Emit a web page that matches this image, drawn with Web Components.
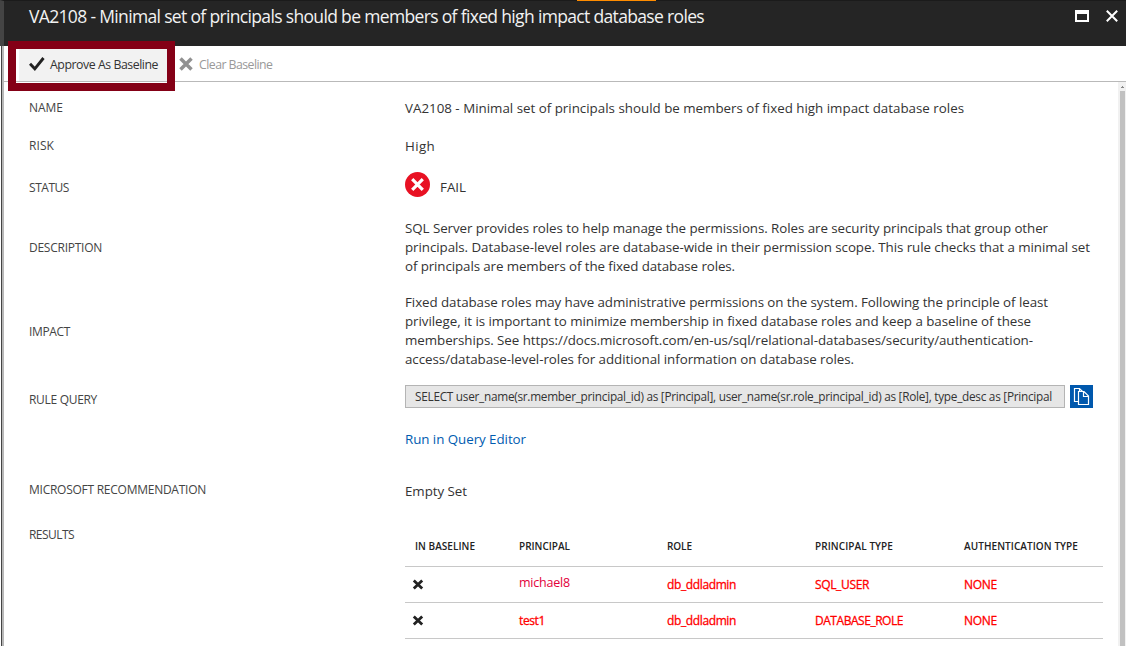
<!DOCTYPE html>
<html lang="en">
<head>
<meta charset="utf-8">
<title>VA2108</title>
<style>
html,body{margin:0;height:650px;overflow:hidden;background:#fff;font-family:"Open Sans","Noto Sans",sans-serif}
</style>
</head>
<body>
<rule-blade></rule-blade>
<script>
/* One line of text, letter-spaced to occupy the width given by "w". */
class FitText extends HTMLElement{
  constructor(){super();this.attachShadow({mode:'open'}).innerHTML='<style>:host{display:block;white-space:nowrap}span{display:inline-block}</style><span><slot></slot></span>';}
  connectedCallback(){
    const w=+this.getAttribute('w'),s=this.shadowRoot.querySelector('span'),n=this.textContent.length;
    if(w)this.style.letterSpacing=((w-s.getBoundingClientRect().width)/n).toFixed(4)+'px';
  }
}

class BladeHeader extends HTMLElement{
  constructor(){super();this.attachShadow({mode:'open'}).innerHTML=`<style>
  :host{display:flex;height:46px;box-sizing:border-box;background:#252525;border-top:1px solid #1b1b1b;border-left:4px solid #444;color:#f2f2f2;position:relative}
  i{position:absolute;left:573px;top:-1px;width:79px;height:1px;background:#ff8c00}
  .t{flex:1;padding:1px 0 0 25px;font-size:17.5px;line-height:28px}
  svg{display:block;margin-top:9px}
  .m{margin-right:17px}.c{margin-right:8px}
  </style><i></i><div class="t"><slot></slot></div>
  <svg class="m" width="14" height="12"><path d="M0 0h14v12H0zM2 4v6h10V4z" fill="#fff" fill-rule="evenodd"/></svg>
  <svg class="c" width="12" height="12"><path d="M.8.8l10.4 10.4M11.2.8L.8 11.2" stroke="#fff" stroke-width="2"/></svg>`;}
}

class CommandBar extends HTMLElement{
  constructor(){super();this.attachShadow({mode:'open'}).innerHTML=`<style>
  :host{display:flex;height:36px;box-sizing:border-box;border-bottom:1px solid #b9b9b9;margin-left:4px;padding-left:4px;font-size:12.3px;line-height:20px;color:#333}
  .on{box-sizing:border-box;width:167px;height:50px;margin-top:-5px;border:8px solid #840016;background:linear-gradient(90deg,#fff 3px,#f2f2f2 3px);position:relative;z-index:1;display:flex;padding:6px 0 0 13px;gap:5px}
  .on::after{content:"";position:absolute;left:0;right:0;bottom:0;height:1px;background:#fff;border-top:1px solid #b9b9b9}
  .off{display:flex;gap:6px;padding:9px 0 0 4px;color:#999}
  svg{display:block}
  </style><div class="on"><svg width="16" height="16" style="margin-top:1px"><path d="M1 7.8l4.8 5L14.5 2" fill="none" stroke="#222" stroke-width="2.9"/></svg><fit-text w="108">Approve As Baseline</fit-text></div>
  <div class="off"><svg width="14" height="16" style="margin-top:1px"><path d="M1.5 2.5l11 11M12.5 2.5l-11 11" stroke="#919191" stroke-width="3.5"/></svg><fit-text w="73.500">Clear Baseline</fit-text></div>`;}
}

class DetailRow extends HTMLElement{
  constructor(){super();this.attachShadow({mode:'open'}).innerHTML=`<style>
  :host{display:grid;grid-template-columns:376px 1fr;color:#333;font-size:13.35px;line-height:19px}
  .l{font-size:12px;line-height:18px;color:#444}
  </style><div class="l"><slot name="label"></slot></div><div><slot></slot></div>`;}
}

class StatusBadge extends HTMLElement{
  constructor(){super();this.attachShadow({mode:'open'}).innerHTML=`<style>
  :host{display:flex;gap:10px}div{padding-top:6px}
  </style><svg width="25" height="25"><circle cx="12.5" cy="12.5" r="12.5" fill="#e81123"/><path d="M7.2 7.2l10.6 10.6M17.8 7.2L7.2 17.8" stroke="#fff" stroke-width="3.2"/></svg><div><slot></slot></div>`;}
}

class QueryBox extends HTMLElement{
  constructor(){super();this.attachShadow({mode:'open'}).innerHTML=`<style>
  :host{display:flex;gap:5px}
  .q{box-sizing:border-box;width:660px;height:23px;border:1px solid #b4b4b4;background:#e6e6e6;padding-left:9px;font-size:11.8px;line-height:21px;color:#333}
  .b{width:23px;height:23px;background:#0058ad}svg{display:block}
  </style><div class="q"><slot></slot></div><div class="b"><svg width="23" height="23" fill="none" stroke="#fff" stroke-width="1.2"><path d="M8.5 16.5h-4v-13h5l3 3M9.500 3.500v3"/><path d="M8.500 6.500h5.500l4.500 4.500v8.500h-10zM13.500 6.500v5h5"/></svg></div>`;}
}

class ResultsTable extends HTMLElement{
  constructor(){super();
  const x='<svg width="12" height="12"><path d="M1.800 1.500l8.400 8M10.200 1.500l-8.400 8" stroke="#222" stroke-width="2.800"/></svg>';
  this.attachShadow({mode:'open'}).innerHTML=`<style>
  :host{display:block;width:698px}
  .r{display:grid;grid-template-columns:114px 148px 148px 149px 1fr;box-sizing:border-box;height:36px;border-bottom:1px solid #c8c8c8;font-size:12px;line-height:35px;color:#f00;-webkit-text-stroke:.3px #f00}
  .h{height:41px;line-height:40px;font-size:10px;font-weight:600;color:#222;-webkit-text-stroke:0}
  .h>:first-child{padding-left:10px}
  svg{display:block;margin:12px 0 0 7px}
  .thin{font-size:12.5px;line-height:31px;color:#e3003a;-webkit-text-stroke:0}
  </style>
  <div class="r h"><fit-text w="60">IN BASELINE</fit-text><fit-text w="51">PRINCIPAL</fit-text><fit-text w="25">ROLE</fit-text><fit-text w="78">PRINCIPAL TYPE</fit-text><fit-text w="114">AUTHENTICATION TYPE</fit-text></div>
  <div class="r">${x}<fit-text class="thin" w="51">michael8</fit-text><fit-text w="69">db_ddladmin</fit-text><fit-text w="54">SQL_USER</fit-text><fit-text w="33">NONE</fit-text></div>
  <div class="r">${x}<fit-text w="26">test1</fit-text><fit-text w="69">db_ddladmin</fit-text><fit-text w="88">DATABASE_ROLE</fit-text><fit-text w="33">NONE</fit-text></div>`;}
}

class ScrollTrack extends HTMLElement{
  constructor(){super();this.attachShadow({mode:'open'}).innerHTML=`<style>
  :host{display:flex;flex-direction:column;width:8px;background:#f1f1f1}
  svg{display:block;height:9px}div{flex:1;margin:0 1px 0 2px;background:#c1c1c1}
  </style><svg width="8" height="9"><path d="M3 6V5h1V4h1v1h1v1z" fill="#888"/></svg><div></div>`;}
}

class RuleBlade extends HTMLElement{
  constructor(){super();this.attachShadow({mode:'open'}).innerHTML=`<style>
  :host{display:block;width:1126px;height:646px;overflow:hidden}
  .frame{height:600px;background:linear-gradient(90deg,#fff 1px,#444 1px,#444 2px,#b8b8b8 2px,#b8b8b8 4px,#fff 4px)}
  .body{display:flex;height:564px}
  .rows{flex:1;padding:17px 0 0 29px;display:flex;flex-direction:column}
  detail-row{flex:none}
  .link{color:#005bb0;margin-top:22px}
  </style>
  <blade-header><fit-text w="675">VA2108 - Minimal set of principals should be members of fixed high impact database roles</fit-text></blade-header>
  <div class="frame"><command-bar></command-bar>
  <div class="body"><div class="rows">
   <detail-row style="height:38px"><fit-text slot="label" w="34">NAME</fit-text><fit-text w="559">VA2108 - Minimal set of principals should be members of fixed high impact database roles</fit-text></detail-row>
   <detail-row style="height:35px"><fit-text slot="label" w="25">RISK</fit-text><fit-text w="30">High</fit-text></detail-row>
   <detail-row style="height:47px"><fit-text slot="label" w="40" style="margin-top:7px">STATUS</fit-text><status-badge><fit-text w="26">FAIL</fit-text></status-badge></detail-row>
   <detail-row style="height:74px"><fit-text slot="label" w="73" style="margin-top:20px">DESCRIPTION</fit-text>
    <fit-text w="643">SQL Server provides roles to help manage the permissions. Roles are security principals that group other</fit-text><fit-text w="685">principals. Database-level roles are database-wide in their permission scope. This rule checks that a minimal set</fit-text><fit-text w="330">of principals are members of the fixed database roles.</fit-text></detail-row>
   <detail-row style="height:92px"><fit-text slot="label" w="41" style="margin-top:30px">IMPACT</fit-text>
    <fit-text w="643">Fixed database roles may have administrative permissions on the system. Following the principle of least</fit-text><fit-text w="626">privilege, it is important to minimize membership in fixed database roles and keep a baseline of these</fit-text><fit-text w="628">memberships. See https://docs.microsoft.com/en-us/sql/relational-databases/security/authentication-</fit-text><fit-text w="449">access/database-level-roles for additional information on database roles.</fit-text></detail-row>
   <detail-row style="height:97px"><fit-text slot="label" w="68" style="margin-top:6px">RULE QUERY</fit-text><query-box><fit-text w="637">SELECT user_name(sr.member_principal_id) as [Principal], user_name(sr.role_principal_id) as [Role], type_desc as [Principal</fit-text></query-box><fit-text class="link" w="121">Run in Query Editor</fit-text></detail-row>
   <detail-row style="height:44px"><fit-text slot="label" w="177" style="margin-top:-1px">MICROSOFT RECOMMENDATION</fit-text><fit-text w="62">Empty Set</fit-text></detail-row>
   <detail-row><fit-text slot="label" w="45">RESULTS</fit-text><results-table></results-table></detail-row>
  </div><scroll-track></scroll-track></div></div>`;}
}
for(const [n,c] of Object.entries({'blade-header':BladeHeader,'command-bar':CommandBar,'detail-row':DetailRow,'status-badge':StatusBadge,'query-box':QueryBox,'results-table':ResultsTable,'scroll-track':ScrollTrack,'rule-blade':RuleBlade,'fit-text':FitText}))customElements.define(n,c);
</script>
</body>
</html>
